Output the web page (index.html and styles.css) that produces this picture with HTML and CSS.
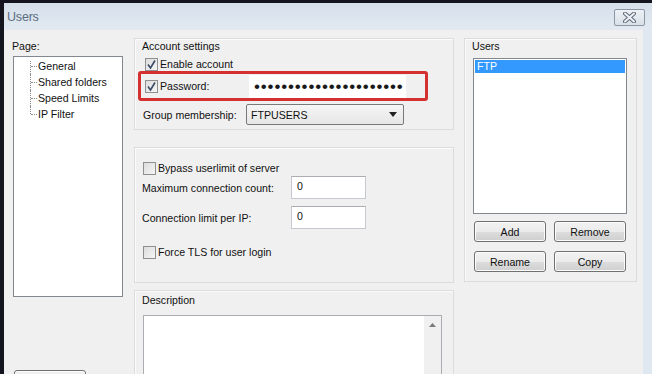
FILE: index.html
```html
<!DOCTYPE html>
<html>
<head>
<meta charset="utf-8">
<link rel="stylesheet" href="styles.css">
</head>
<body>
<div class="win">
  <div class="titlebar">
    <span class="title">Users</span>
    <div class="close">
      <svg width="15" height="11" viewBox="0 0 15 11">
        <path d="M3 1.5 L12 9.5 M12 1.5 L3 9.5" stroke="#5f6a78" stroke-width="4" stroke-linecap="round" fill="none"/>
        <path d="M3 1.5 L12 9.5 M12 1.5 L3 9.5" stroke="#eef1f5" stroke-width="2" stroke-linecap="round" fill="none"/>
      </svg>
    </div>
  </div>
  <div class="content">
    <div class="leftcol">
      <div class="lbl">Page:</div>
      <div class="tree">
        <ul class="tree-list">
          <li class="tree-item">General</li>
          <li class="tree-item">Shared folders</li>
          <li class="tree-item">Speed Limits</li>
          <li class="tree-item last">IP Filter</li>
        </ul>
      </div>
      <div class="btn leftbtn"></div>
    </div>

    <div class="midcol">
      <div class="panel p1">
        <div class="legend">Account settings</div>
        <div class="row enable">
          <span class="cb checked"><svg width="11" height="11" viewBox="0 0 11 11"><path d="M2 5.5 L4.5 9 L9 1.5" stroke="#3a4a66" stroke-width="1.6" fill="none"/></svg></span>
          <span class="cbtext">Enable account</span>
        </div>
        <div class="redbox">
          <span class="cb checked"><svg width="11" height="11" viewBox="0 0 11 11"><path d="M2 5.5 L4.5 9 L9 1.5" stroke="#3a4a66" stroke-width="1.6" fill="none"/></svg></span>
          <span class="cbtext pwlabel">Password:</span>
          <div class="input pw"><span class="dots">••••••••••••••••••••••</span></div>
        </div>
        <div class="row group">
          <span class="grlabel">Group membership:</span>
          <div class="select"><span>FTPUSERS</span><svg width="8" height="5" viewBox="0 0 8 5"><path d="M0 0 H8 L4 5 Z" fill="#222"/></svg></div>
        </div>
      </div>

      <div class="panel p2">
        <div class="row bypass">
          <span class="cb"></span>
          <span class="cbtext">Bypass userlimit of server</span>
        </div>
        <div class="row field f1">
          <span class="flabel">Maximum connection count:</span>
          <div class="input num">0</div>
        </div>
        <div class="row field f2">
          <span class="flabel">Connection limit per IP:</span>
          <div class="input num">0</div>
        </div>
        <div class="row tls">
          <span class="cb"></span>
          <span class="cbtext">Force TLS for user login</span>
        </div>
      </div>

      <div class="panel p3">
        <div class="legend">Description</div>
        <div class="textarea">
          <div class="scroll">
            <svg width="7" height="4" viewBox="0 0 7 4"><path d="M0 4 L3.5 0 L7 4 Z" fill="#7a7a7a"/></svg>
          </div>
        </div>
      </div>
    </div>

    <div class="rightcol">
      <div class="panel p4">
        <div class="legend">Users</div>
        <div class="listbox">
          <div class="sel">FTP</div>
        </div>
        <div class="btnrow">
          <div class="btn">Add</div>
          <div class="btn">Remove</div>
        </div>
        <div class="btnrow r2">
          <div class="btn">Rename</div>
          <div class="btn">Copy</div>
        </div>
      </div>
    </div>
  </div>
</div>
</body>
</html>
```

FILE: styles.css
```css
html, body {
  margin: 0;
  padding: 0;
}
body {
  width: 652px;
  height: 374px;
  overflow: hidden;
  background: #15151f;
  font-family: "Liberation Sans", Arial, sans-serif;
  font-size: 10.6px;
  color: #111;
}
.win {
  margin: 3px 0 0 4px;
  width: 648px;
  height: 371px;
  background: #dfe8f1;
  overflow: hidden;
}
.titlebar {
  height: 27px;
  display: flex;
  align-items: center;
  justify-content: space-between;
  background: linear-gradient(#d6e0eb, #e2e9f1);
}
.title {
  margin-left: 3px;
  font-size: 12.5px;
  color: #5b6d80;
  letter-spacing: -0.2px;
}
.close {
  width: 29px;
  height: 15px;
  margin-right: 7px;
  margin-top: 1px;
  border: 1px solid #8d97a3;
  border-radius: 2px;
  background: linear-gradient(#eef2f6, #d9e0e8);
  display: flex;
  align-items: center;
  justify-content: center;
}
.content {
  display: flex;
  height: 344px;
  width: 639px;
  background: #f0f0f0;
  overflow: hidden;
}
.leftcol {
  margin-left: 9px;
  width: 110px;
  padding-top: 10px;
}
.lbl {
  height: 13px;
  line-height: 13px;
  margin-left: -1px;
}
.tree {
  margin-top: 3px;
  height: 239px;
  border: 1px solid #828790;
  background: #fff;
}
.tree-list {
  list-style: none;
  margin: 0;
  padding: 1px 0 0 0;
}
.tree-item {
  position: relative;
  height: 16px;
  line-height: 16px;
  padding-left: 24px;
}
.tree-item::before {
  content: "";
  position: absolute;
  left: 16px;
  top: 0;
  height: 16px;
  border-left: 1px dotted #8a8a8a;
}
.tree-item:first-child::before {
  top: 3px;
  height: 13px;
}
.tree-item.last::before {
  height: 8px;
}
.tree-item::after {
  content: "";
  position: absolute;
  left: 17px;
  top: 8px;
  width: 6px;
  border-top: 1px dotted #8a8a8a;
}
.leftbtn {
  margin-top: 73px;
  margin-left: 1px;
  width: 105px;
  height: 20px;
}
.midcol {
  margin-left: 11px;
  width: 320px;
}
.panel {
  box-sizing: border-box;
  border: 1px solid #dcdcdc;
  box-shadow: inset 1px 1px 0 #fbfbfb;
  background: #f0f0f0;
}
.p1 {
  margin-top: 8px;
  height: 92px;
}
.legend {
  height: 13px;
  line-height: 13px;
  margin: 1px 0 0 7px;
}
.row {
  display: flex;
  align-items: center;
}
.cb {
  box-sizing: border-box;
  width: 13px;
  height: 13px;
  border: 1px solid #8e8f8f;
  background: linear-gradient(135deg, #dcdcdc, #f6f6f6);
  display: flex;
  align-items: center;
  justify-content: center;
  flex: none;
}
.cbtext {
  margin-left: 2px;
}
.enable {
  margin-top: 4px;
  height: 14px;
  padding-left: 10px;
}
.redbox {
  box-sizing: border-box;
  margin-left: 3px;
  width: 290px;
  height: 30px;
  border: 3px solid #d3302f;
  border-radius: 3px;
  display: flex;
  align-items: center;
  padding-left: 4px;
}
.pwlabel {
  width: 89px;
}
.input {
  box-sizing: border-box;
  background: #fff;
  border: 1px solid #c5c8ce;
  border-top-color: #abadb3;
}
.pw {
  width: 157px;
  height: 23px;
  display: flex;
  align-items: center;
  padding-left: 4px;
  overflow: hidden;
  border-color: #fff;
}
.dots {
  font-size: 17px;
  letter-spacing: 0.85px;
  white-space: nowrap;
  color: #1a1a1a;
  line-height: 17px;
}
.group {
  margin-top: 3px;
  height: 21px;
  padding-left: 8px;
}
.grlabel {
  width: 103px;
}
.select {
  box-sizing: border-box;
  width: 158px;
  height: 21px;
  border: 1px solid #7a7a7a;
  border-radius: 2px;
  background: linear-gradient(#f6f6f6, #e6e6e6);
  display: flex;
  align-items: center;
  justify-content: space-between;
  padding: 0 6px 0 4px;
}
.p2 {
  margin-top: 17px;
  height: 136px;
}
.bypass {
  margin-top: 13px;
  height: 14px;
  padding-left: 8px;
}
.field {
  padding-left: 7px;
}
.f1 {
  margin-top: 1px;
}
.f2 {
  margin-top: 7px;
}
.flabel {
  width: 149px;
}
.num {
  width: 75px;
  height: 23px;
  padding: 3px 0 0 5px;
  line-height: 13px;
}
.tls {
  margin-top: 16px;
  height: 14px;
  padding-left: 8px;
}
.p3 {
  margin-top: 7px;
  height: 100px;
}
.p3 .legend {
  margin-top: 3px;
}
.textarea {
  box-sizing: border-box;
  margin: 8px 0 0 8px;
  width: 299px;
  height: 80px;
  background: #fff;
  border: 1px solid #abadb3;
  display: flex;
  justify-content: flex-end;
}
.scroll {
  width: 17px;
  background: #f0f0f0;
  display: flex;
  justify-content: center;
  padding-top: 7px;
  box-sizing: border-box;
  align-items: flex-start;
}
.rightcol {
  margin-left: 10px;
  width: 173px;
}
.p4 {
  margin-top: 8px;
  height: 244px;
}
.p4 .legend {
  margin-left: 7px;
}
.listbox {
  box-sizing: border-box;
  margin: 5px 0 0 8px;
  width: 154px;
  height: 156px;
  border: 1px solid #828790;
  background: #fff;
  padding: 1px;
}
.sel {
  height: 13px;
  line-height: 13px;
  background: #3399ff;
  color: #fff;
  padding-left: 2px;
}
.btnrow {
  display: flex;
  gap: 8px;
  margin: 7px 0 0 9px;
}
.r2 {
  margin-top: 9px;
}
.btn {
  box-sizing: border-box;
  width: 72px;
  height: 21px;
  border: 1px solid #707070;
  border-radius: 3px;
  background: linear-gradient(#f2f2f2 0%, #ebebeb 50%, #dddddd 51%, #cfcfcf 100%);
  box-shadow: inset 0 0 0 1px #fcfcfc;
  display: flex;
  align-items: center;
  justify-content: center;
}
```
